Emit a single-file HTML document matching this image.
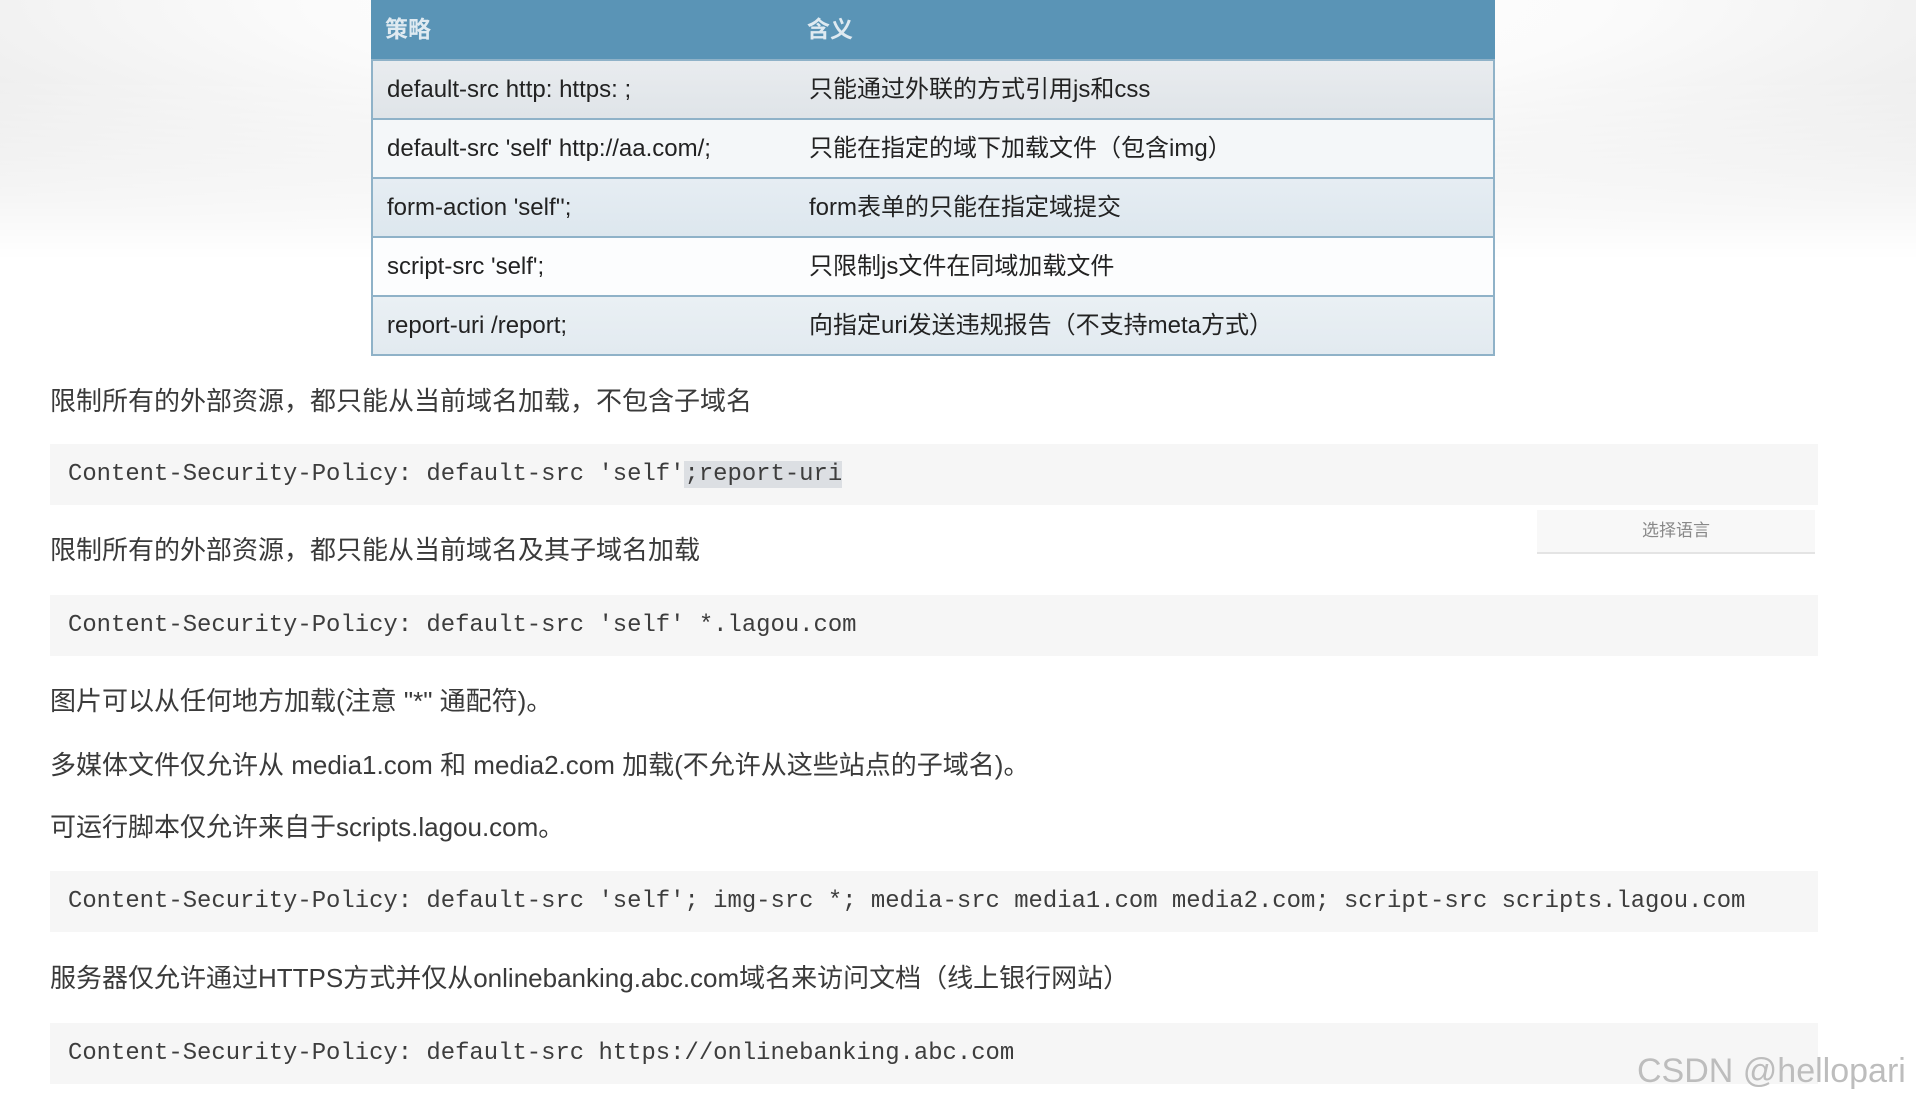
<!DOCTYPE html>
<html><head><meta charset="utf-8"><style>
html,body{margin:0;padding:0;width:1916px;height:1102px;overflow:hidden;background:#fff;position:relative;font-family:"Liberation Sans","Noto Sans CJK SC",sans-serif;}
.bg{position:absolute;left:0;top:0;width:1916px;height:260px;background:radial-gradient(ellipse 75% 100% at 50% 0%, #ffffff 0%, #fbfbfb 45%, #e4e4e4 100%);-webkit-mask-image:linear-gradient(#000 30%,transparent 100%);mask-image:linear-gradient(#000 30%,transparent 100%);}
.tb{position:absolute;left:371px;top:0;width:1124px;height:355px;font-family:"Liberation Sans Narrow","Liberation Sans","Noto Sans CJK SC",sans-serif;font-size:24px;color:#222;}
.row{position:absolute;left:0;width:1120px;height:57px;border:2px solid #8fb2c8;border-bottom:none;}
.row span{position:absolute;top:0;line-height:57px;white-space:nowrap;}
.row .a{left:14px}.row .b{left:436px}
.h{background:#5a94b6;color:#dfeaf1;font-weight:bold;border:none;height:59px;width:1124px;font-size:23px;}
.h span{line-height:59px}
.r1{background:linear-gradient(#e9ecef,#dfe4e8);}
.r2{background:#f4f7f9;}
.r3{background:linear-gradient(#e6edf3,#dde7ee);}
.r4{background:#fcfdfe;}
.r5{background:linear-gradient(#eaf0f4,#e2eaf0);border-bottom:2px solid #8fb2c8;}
.p{position:absolute;left:50px;font-size:26px;color:#3a3a3a;line-height:30px;white-space:nowrap;font-family:"Liberation Sans","Noto Sans CJK SC",sans-serif;}
.code{position:absolute;left:50px;width:1768px;height:61px;background:#f6f6f6;}
.code span.t{position:absolute;left:18px;top:16px;font-family:"Liberation Mono",monospace;font-size:23.9px;color:#3d3d3d;white-space:pre;line-height:30px;}
.sel{background:#dcdfe3;}
.lang{position:absolute;left:1537px;top:510px;width:278px;height:42px;background:#f8f8f8;border-bottom:2px solid #e4e4e4;color:#888;font-size:17px;text-align:center;line-height:42px;font-family:"Liberation Sans","Noto Sans CJK SC",sans-serif;}
.wm{position:absolute;left:1637px;top:1052px;font-size:34px;color:#bdbdbd;white-space:nowrap;font-family:"Liberation Sans",sans-serif;}
</style></head><body>
<div class="bg"></div>
<div class="tb">
<div class="row h" style="top:0"><span class="a">策略</span><span class="b">含义</span></div>
<div class="row r1" style="top:59px"><span class="a">default-src http: https: ;</span><span class="b">只能通过外联的方式引用js和css</span></div>
<div class="row r2" style="top:118px"><span class="a">default-src 'self' http://aa.com/;</span><span class="b">只能在指定的域下加载文件（包含img）</span></div>
<div class="row r3" style="top:177px"><span class="a">form-action 'self'';</span><span class="b">form表单的只能在指定域提交</span></div>
<div class="row r4" style="top:236px"><span class="a">script-src 'self';</span><span class="b">只限制js文件在同域加载文件</span></div>
<div class="row r5" style="top:295px"><span class="a">report-uri /report;</span><span class="b">向指定uri发送违规报告（不支持meta方式）</span></div>
</div>

<div class="p" style="top:386px">限制所有的外部资源，都只能从当前域名加载，不包含子域名</div>
<div class="code" style="top:444px"><span class="t">Content-Security-Policy: default-src 'self'<span class="sel">;report-uri</span></span></div>
<div class="lang">选择语言</div>
<div class="p" style="top:535px">限制所有的外部资源，都只能从当前域名及其子域名加载</div>
<div class="code" style="top:595px"><span class="t">Content-Security-Policy: default-src 'self' *.lagou.com</span></div>
<div class="p" style="top:686px">图片可以从任何地方加载(注意 "*" 通配符)。</div>
<div class="p" style="top:750px">多媒体文件仅允许从 media1.com 和 media2.com 加载(不允许从这些站点的子域名)。</div>
<div class="p" style="top:812px">可运行脚本仅允许来自于scripts.lagou.com。</div>
<div class="code" style="top:871px"><span class="t">Content-Security-Policy: default-src 'self'; img-src *; media-src media1.com media2.com; script-src scripts.lagou.com</span></div>
<div class="p" style="top:963px">服务器仅允许通过HTTPS方式并仅从onlinebanking.abc.com域名来访问文档（线上银行网站）</div>
<div class="code" style="top:1023px"><span class="t">Content-Security-Policy: default-src https://onlinebanking.abc.com</span></div>
<div class="wm">CSDN @hellopari</div>
</body></html>
